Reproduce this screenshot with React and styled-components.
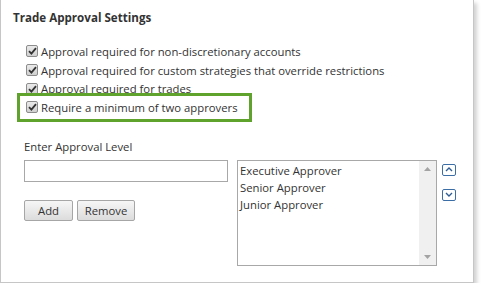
import React from 'react';
import styled, { createGlobalStyle } from 'styled-components';

const Global = createGlobalStyle`
  body {
    margin: 0;
    background: #fff;
    font-family: "Open Sans", "Noto Sans", sans-serif;
    color: #333;
  }
`;

const Panel = styled.div`
  box-sizing: border-box;
  width: 474px;
  height: 283px;
  border: 1px solid #c6c6c6;
  border-top: none;
  box-shadow: 3px 3px 4px rgba(0, 0, 0, 0.18);
  padding: 10px 0 0 12px;
`;

const Title = styled.div`
  font-weight: 700;
  font-size: 11.6px;
  color: #333;
  height: 24px;
`;

const Options = styled.div`
  display: flex;
  flex-direction: column;
  align-items: flex-start;
  padding-left: 13px;
  margin-top: 8px;
`;

const Row = styled.label`
  display: flex;
  align-items: center;
  gap: 3px;
  height: 18.7px;
  font-size: 11.3px;
  color: #333;
  ${p => p.$highlight && `
    outline: 3px solid #5fa22c;
    outline-offset: 2px;
    padding-right: 9px;
    margin-left: -4px;
    padding-left: 4px;
  `}
`;

const Box = styled.span`
  box-sizing: border-box;
  width: 12px;
  height: 12px;
  border: 1px solid #8c8c8c;
  border-radius: 2px;
  background: linear-gradient(#eaeaea, #d0d0d0);
  display: flex;
  align-items: center;
  justify-content: center;
  flex: none;
`;

const Form = styled.div`
  display: flex;
  margin-top: 21px;
  padding-left: 11px;
`;

const LeftCol = styled.div`
  display: flex;
  flex-direction: column;
  width: 213px;
`;

const Label = styled.div`
  font-size: 11.3px;
  color: #333;
  height: 18px;
  line-height: 18px;
`;

const Input = styled.div`
  box-sizing: border-box;
  width: 204px;
  height: 22px;
  border: 1px solid #a8a8a8;
  margin-top: 4px;
`;

const Buttons = styled.div`
  display: flex;
  gap: 4px;
  margin-top: 18px;
`;

const Button = styled.div`
  box-sizing: border-box;
  width: ${p => p.$w}px;
  height: 21px;
  border: 1px solid #a6a6a6;
  border-radius: 2px;
  background: linear-gradient(#f6f6f6, #dcdcdc);
  font-size: 11.3px;
  color: #333;
  display: flex;
  align-items: center;
  justify-content: center;
`;

const ListBox = styled.div`
  box-sizing: border-box;
  width: 200px;
  height: 106px;
  margin-top: 22px;
  border: 1px solid #a8a8a8;
  display: flex;
`;

const Items = styled.div`
  flex: 1;
  padding: 1px 0 0 2px;
  font-size: 11.3px;
  line-height: 17px;
  color: #333;
`;

const Scroll = styled.div`
  width: 17px;
  background: #f0f0f0;
  display: flex;
  flex-direction: column;
  justify-content: space-between;
  align-items: center;
  padding: 6px 0;
`;

const Arrows = styled.div`
  display: flex;
  flex-direction: column;
  gap: 13px;
  margin: 26px 0 0 5px;
`;

const ArrowBtn = styled.div`
  box-sizing: border-box;
  width: 14px;
  height: 12px;
  border: 1px solid #3b6ea5;
  border-radius: 2px;
  display: flex;
  align-items: center;
  justify-content: center;
`;

const Check = () => (
  <Box>
    <svg width="9" height="8" viewBox="0 0 9 8">
      <path d="M1 4.2 L3.4 6.6 L8 1.2" fill="none" stroke="#333" strokeWidth="1.8" />
    </svg>
  </Box>
);

const Tri = ({ up }) => (
  <svg width="7" height="4" viewBox="0 0 7 4">
    <path d={up ? 'M0 4 L3.5 0 L7 4 Z' : 'M0 0 L3.5 4 L7 0 Z'} fill="#a3a3a3" />
  </svg>
);

const Chevron = ({ up }) => (
  <svg width="8" height="5" viewBox="0 0 8 5">
    <path d={up ? 'M1 4 L4 1 L7 4' : 'M1 1 L4 4 L7 1'} fill="none" stroke="#2c5d93" strokeWidth="1.4" />
  </svg>
);

const options = [
  'Approval required for non-discretionary accounts',
  'Approval required for custom strategies that override restrictions',
  'Approval required for trades',
];

export default function App() {
  return (
    <>
      <Global />
      <Panel>
        <Title>Trade Approval Settings</Title>
        <Options>
          {options.map(o => (
            <Row key={o}><Check />{o}</Row>
          ))}
          <Row $highlight><Check />Require a minimum of two approvers</Row>
        </Options>
        <Form>
          <LeftCol>
            <Label>Enter Approval Level</Label>
            <Input />
            <Buttons>
              <Button $w={49}>Add</Button>
              <Button $w={58}>Remove</Button>
            </Buttons>
          </LeftCol>
          <ListBox>
            <Items>
              <div>Executive Approver</div>
              <div>Senior Approver</div>
              <div>Junior Approver</div>
            </Items>
            <Scroll>
              <Tri up />
              <Tri />
            </Scroll>
          </ListBox>
          <Arrows>
            <ArrowBtn><Chevron up /></ArrowBtn>
            <ArrowBtn><Chevron /></ArrowBtn>
          </Arrows>
        </Form>
      </Panel>
    </>
  );
}
